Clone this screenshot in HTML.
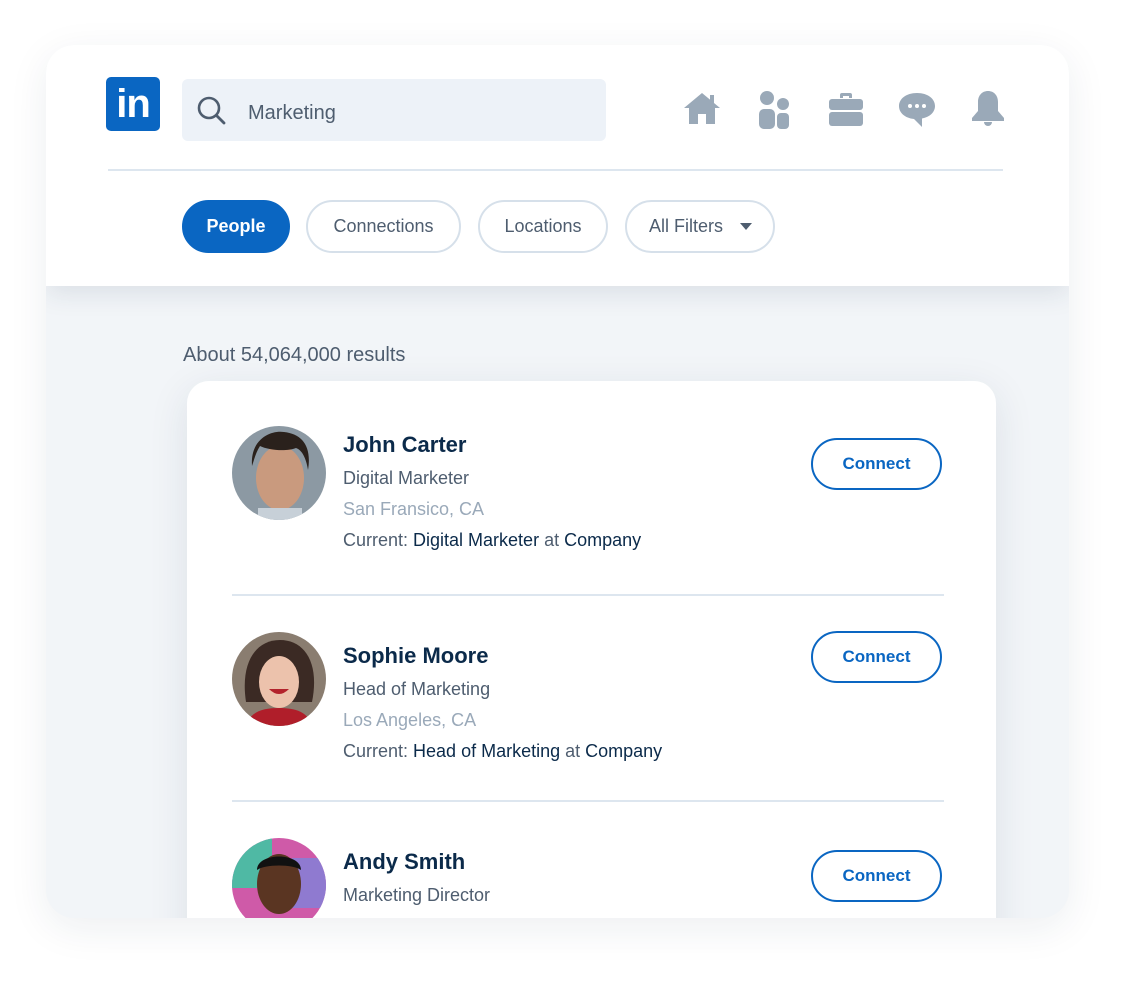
<!DOCTYPE html>
<html><head><meta charset="utf-8"><style>
*{margin:0;padding:0;box-sizing:border-box}
body{width:1130px;height:1001px;background:#fff;font-family:"Liberation Sans",sans-serif;position:relative;overflow:hidden}
.app{position:absolute;left:46px;top:45px;width:1023px;height:873px;background:#f2f5f8;border-radius:28px;box-shadow:0 10px 40px rgba(30,50,80,.08);overflow:hidden}
.hdr{position:absolute;left:0;top:0;width:1023px;height:241px;background:#fff;box-shadow:0 8px 24px rgba(30,50,80,.10)}
.logo{position:absolute;left:60px;top:32px;width:54px;height:54px;background:#0a66c2;border-radius:5px;color:#fff;font-weight:bold;font-size:40px;line-height:54px;text-align:center;letter-spacing:-1px}
.search{position:absolute;left:136px;top:34px;width:424px;height:62px;background:#edf2f8;border-radius:6px}
.search span{position:absolute;left:66px;top:23px;font-size:20px;color:#4e5d6f}
.line{position:absolute;left:62px;top:124px;width:895px;height:2px;background:#dde6ef}
.pill{position:absolute;top:155px;height:53px;border:2px solid #d6e0ea;border-radius:27px;font-size:18px;color:#4e5d6f;line-height:49px;text-align:center}
.pill.on{background:#0a66c2;border-color:#0a66c2;color:#fff;font-weight:bold}
.res{position:absolute;left:137px;top:299px;font-size:20px;color:#4e5d6f}
.card{position:absolute;left:141px;top:336px;width:809px;height:600px;background:#fff;border-radius:22px;box-shadow:0 10px 40px rgba(30,50,80,.10)}
.row{position:absolute;left:45px;width:712px}
.av{position:absolute;left:0;width:94px;height:94px;border-radius:50%;overflow:hidden}
.nm{position:absolute;left:111px;font-size:22px;font-weight:bold;color:#0b2a4a}
.t{position:absolute;left:111px;font-size:18px;color:#4e5d6f;white-space:nowrap}
.t.l{color:#9aa9b9}
.t b{font-weight:normal;color:#0b2a4a}
.btn{position:absolute;left:579px;width:131px;height:52px;border:2px solid #0a66c2;border-radius:26px;color:#0a66c2;font-weight:bold;font-size:17px;text-align:center;line-height:48px}
.sep{position:absolute;left:45px;width:712px;height:2px;background:#dde6ef}
</style></head><body>
<div class="app">
 <div class="hdr">
  <div class="logo">in</div>
  <div class="search">
   <svg style="position:absolute;left:14px;top:16px" width="32" height="32" viewBox="0 0 32 32"><circle cx="13" cy="13" r="10" fill="none" stroke="#4e5d6f" stroke-width="2.6"/><path d="M20.5 20.5L28 28" stroke="#4e5d6f" stroke-width="2.8" stroke-linecap="round"/></svg>
   <span>Marketing</span>
  </div>
  <svg style="position:absolute;left:636px;top:45px" width="40" height="36" viewBox="0 0 40 36" fill="#9aa9b8"><path d="M20 3L2 18h5v16h9V24h8v10h9V18h5l-6-5V5h-4v4.6z"/></svg>
  <svg style="position:absolute;left:710px;top:45px" width="36" height="40" viewBox="0 0 36 40" fill="#9aa9b8"><circle cx="11" cy="8" r="7"/><circle cx="27" cy="14" r="6"/><rect x="3" y="19" width="16" height="20" rx="5"/><rect x="21" y="23" width="12" height="16" rx="4"/></svg>
  <svg style="position:absolute;left:782px;top:47px" width="36" height="36" viewBox="0 0 36 36" fill="#9aa9b8"><path d="M12 6V3a2 2 0 012-2h8a2 2 0 012 2v3h-3V4h-6v2z"/><rect x="1" y="7" width="34" height="11" rx="3"/><rect x="1" y="20" width="34" height="14" rx="3"/></svg>
  <svg style="position:absolute;left:851px;top:45px" width="40" height="40" viewBox="0 0 40 40"><path fill="#9aa9b8" d="M20 3C9 3 2 9 2 16s6 12 15 13l8 8v-8.5C33 27 38 22 38 16 38 9 31 3 20 3z"/><circle cx="13" cy="16" r="2" fill="#fff"/><circle cx="20" cy="16" r="2" fill="#fff"/><circle cx="27" cy="16" r="2" fill="#fff"/></svg>
  <svg style="position:absolute;left:924px;top:44px" width="36" height="40" viewBox="0 0 36 40" fill="#9aa9b8"><path d="M18 2c-6 0-10 4.5-10 11v9l-6 7v3h32v-3l-6-7v-9C28 6.5 24 2 18 2z"/><path d="M14 33h8a4 4 0 01-8 0z"/></svg>
  <div class="line"></div>
  <div class="pill on" style="left:136px;width:108px">People</div>
  <div class="pill" style="left:260px;width:155px">Connections</div>
  <div class="pill" style="left:432px;width:130px">Locations</div>
  <div class="pill" style="left:579px;width:150px;text-align:left;padding-left:22px">All Filters<svg style="position:absolute;left:113px;top:21px" width="12" height="8" viewBox="0 0 12 8"><path d="M0 0h12L6 7z" fill="#4e5d6f"/></svg></div>
 </div>
 <div class="res">About 54,064,000 results</div>
 <div class="card">
  <div class="row" style="top:45px">
   <div class="av"><svg width="94" height="94" viewBox="0 0 94 94"><rect width="94" height="94" fill="#8c99a3"/><ellipse cx="48" cy="52" rx="24" ry="32" fill="#c99a7e"/><path d="M20 40C18 12 40 4 52 6c18 2 28 14 24 38-2-12-6-20-12-22-10 4-28 2-36-2-4 6-6 14-8 20z" fill="#2a211c"/><rect x="26" y="82" width="44" height="14" fill="#c7d0d8"/></svg></div>
   <div class="nm" style="top:6px">John Carter</div>
   <div class="t" style="top:42px">Digital Marketer</div>
   <div class="t l" style="top:73px">San Fransico, CA</div>
   <div class="t" style="top:104px">Current: <b>Digital Marketer</b> at <b>Company</b></div>
   <div class="btn" style="top:12px">Connect</div>
  </div>
  <div class="sep" style="top:213px"></div>
  <div class="row" style="top:256px">
   <div class="av" style="top:-5px"><svg width="94" height="94" viewBox="0 0 94 94"><rect width="94" height="94" fill="#8a7d70"/><path d="M14 70C8 30 24 8 48 8s40 22 32 62z" fill="#3b2a24"/><ellipse cx="47" cy="50" rx="20" ry="26" fill="#ecc2ac"/><path d="M37 57q10 10 20 0z" fill="#b3232c"/><path d="M14 94c4-14 16-18 33-18s29 4 33 18z" fill="#b01e2a"/></svg></div>
   <div class="nm" style="top:6px">Sophie Moore</div>
   <div class="t" style="top:42px">Head of Marketing</div>
   <div class="t l" style="top:73px">Los Angeles, CA</div>
   <div class="t" style="top:104px">Current: <b>Head of Marketing</b> at <b>Company</b></div>
   <div class="btn" style="top:-6px">Connect</div>
  </div>
  <div class="sep" style="top:419px"></div>
  <div class="row" style="top:462px">
   <div class="av" style="top:-5px"><svg width="94" height="94" viewBox="0 0 94 94"><rect width="94" height="94" fill="#cf5aa8"/><rect width="40" height="50" fill="#4fb9a4"/><rect x="60" y="20" width="34" height="50" fill="#8f7ad0"/><ellipse cx="47" cy="46" rx="22" ry="30" fill="#5a3522"/><path d="M25 32c0-18 44-18 44 0-8-6-36-6-44 0z" fill="#111"/></svg></div>
   <div class="nm" style="top:6px">Andy Smith</div>
   <div class="t" style="top:42px">Marketing Director</div>
   <div class="btn" style="top:7px">Connect</div>
  </div>
 </div>
</div>
</body></html>
